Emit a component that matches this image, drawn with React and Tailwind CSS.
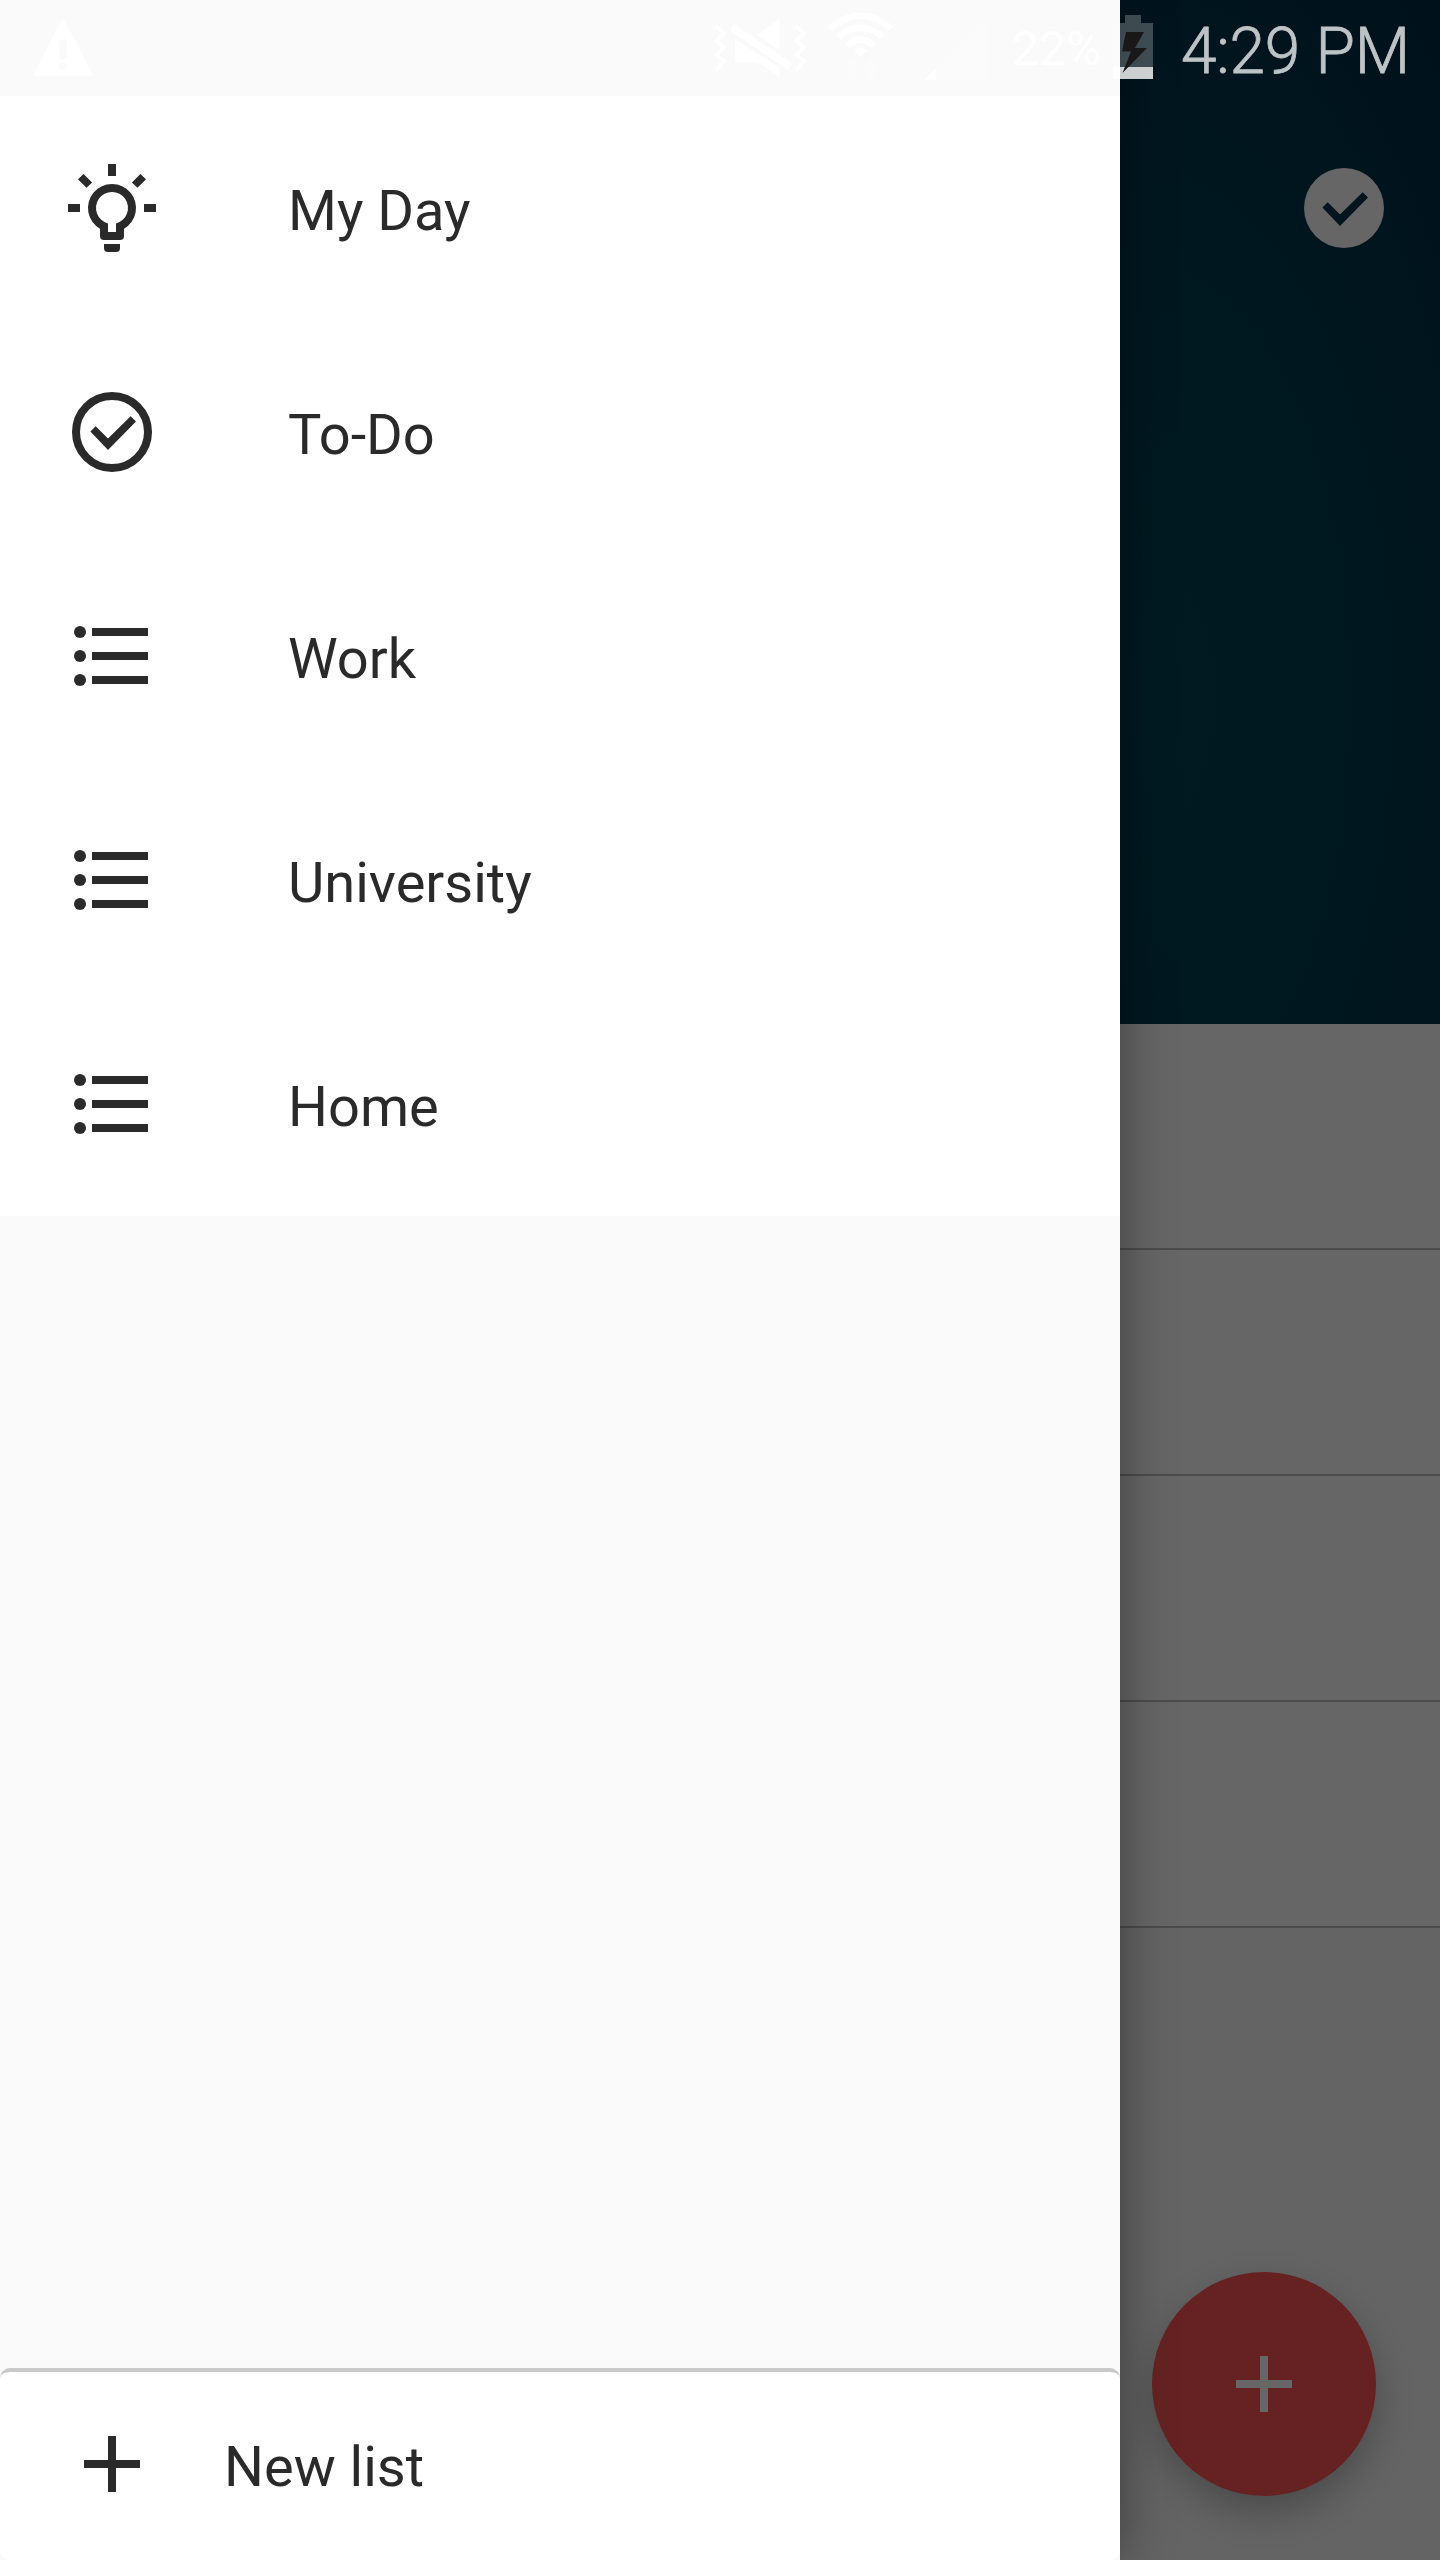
const INK = "#2a2a2a";

const CHECK = "M6.6 11.9L7.93 10.58L11 13.64L16.67 8.05L18 9.4L11 16.5Z";

function BulbIcon() {
  return (
    <svg viewBox="0 0 24 24" className="size-24 shrink-0" fill={INK}>
      <path d="M11 1h2v3h-2zM1 11h3v2H1zM20 11h3v2h-3z" />
      <path d="M4.9 3.48L7.02 5.6L5.65 6.93L3.5 4.83zM19.1 3.48L16.98 5.6L18.35 6.93L20.5 4.83z" />
      <path
        fillRule="evenodd"
        d="M9 17.2A6 6 0 1 1 15 17.2V19a1 1 0 0 1-1 1h-4a1 1 0 0 1-1-1zM11 15.87V18h2v-2.13a4 4 0 1 0-2 0z"
      />
      <path d="M10 21h4v1a1 1 0 0 1-1 1h-2a1 1 0 0 1-1-1z" />
    </svg>
  );
}

function CheckIcon() {
  return (
    <svg viewBox="0 0 24 24" className="size-24 shrink-0" fill={INK}>
      <circle cx="12" cy="12" r="9" fill="none" stroke={INK} strokeWidth="2" />
      <path d={CHECK} />
    </svg>
  );
}

function ListIcon() {
  return (
    <svg viewBox="0 0 24 24" className="size-24 shrink-0" fill={INK}>
      <circle cx="4" cy="6" r="1.5" />
      <circle cx="4" cy="12" r="1.5" />
      <circle cx="4" cy="18" r="1.5" />
      <path d="M7 5h14v2H7zM7 11h14v2H7zM7 17h14v2H7z" />
    </svg>
  );
}

function PlusIcon({ color }) {
  return (
    <svg viewBox="0 0 24 24" className="size-24 shrink-0" fill={color}>
      <path d="M11 5h2v6h6v2h-6v6h-2v-6H5v-2h6z" />
    </svg>
  );
}

const LISTS = [
  { label: "My Day", Icon: BulbIcon },
  { label: "To-Do", Icon: CheckIcon },
  { label: "Work", Icon: ListIcon },
  { label: "University", Icon: ListIcon },
  { label: "Home", Icon: ListIcon },
];

function StatusBar() {
  return (
    <div className="absolute inset-x-0 top-0 z-20 flex h-24 items-start text-white">
      <svg viewBox="0 0 60 58" className="mt-[19px] ml-[33px] h-[58px] w-[60px] shrink-0" fill="white">
        <path
          fillRule="evenodd"
          d="M28 2.5Q30 0 32 2.5L58.500 53Q60 57 56.500 57H3.500Q0 57 1.500 53ZM25.500 20.500L26.800 40H33L34.300 20.500ZM30 43.200a4 4 0 1 0 .01 0Z"
        />
      </svg>
      <svg viewBox="714 0 92 96" className="ml-[621px] h-24 w-[92px] shrink-0" fill="white">
        <path d="M779.500 19V50L757 35zM735 39L779.500 68V77L757.500 62H735z" />
        <path d="M733.500 24L792.500 63.500L788 70L730 30.500z" />
        <path
          d="M716 26L724 33.500L716.500 40.500L724 47.500L716.500 54.500L724 61L716.500 70M796 26L804 33.500L796.500 40.500L804 47.500L796.500 54.500L804 61L796.500 70"
          fill="none"
          stroke="white"
          strokeWidth="3.500"
        />
      </svg>
      <svg viewBox="826 0 70 96" className="ml-[20px] h-24 w-[70px] shrink-0">
        <g fill="none" stroke="white" strokeWidth="6.500">
          <path d="M829.500 28.500Q861 3 891 28.500" />
          <path d="M838 37Q861 18.500 882.500 37" />
          <path d="M847 46Q861 33 873.500 46" />
        </g>
        <path d="M854 50.500Q861 45 867 50.500L860.500 57z" fill="white" />
        <path d="M849 58h7v12h5L852.500 81L844 70h5zM871 57l9 11h-5v11h-9V68h-4z" fill="white" opacity="0.25" />
      </svg>
      <svg viewBox="924 0 64 96" className="ml-[28px] h-24 w-16 shrink-0">
        <path d="M924 80L988 17V80z" fill="white" opacity="0.25" />
        <path d="M924 80L936 68V80z" fill="white" />
      </svg>
      <span className="mt-[19px] ml-[24px] w-[101px] text-[48px] leading-[60px] whitespace-nowrap">22%</span>
      <svg viewBox="0 0 40 64" className="mt-[15px] h-16 w-10 shrink-0">
        <path d="M12 0h16v8h12v44H0V8h12z" fill="white" opacity="0.24" />
        <path d="M0 52h40v12H0z" fill="white" opacity="0.8" />
        <path d="M13 17H31L22 33H34L9.500 58L18 36.500H9z" fill="#181818" />
      </svg>
      <span className="mt-[14px] ml-[28px] text-[64px] leading-[76px] font-light tracking-[-0.2px] whitespace-nowrap text-[#bdc3c6] [-webkit-text-stroke:0.8px_#bdc3c6]">
        4:29 PM
      </span>
    </div>
  );
}

function Drawer() {
  return (
    <aside className="relative z-10 flex h-full w-[1120px] shrink-0 flex-col bg-[#fafafa] pt-24 shadow-[0_0_50px_rgba(0,0,0,0.4)]">
      <nav className="flex flex-col bg-white">
        {LISTS.map(({ label, Icon }) => (
          <a key={label} className="flex h-56 items-center gap-32 pl-16">
            <Icon />
            <span className="pt-[5px] text-[56px] leading-[66px] text-[#2a2a2a]">{label}</span>
          </a>
        ))}
      </nav>
      <button className="mt-auto flex h-48 items-center gap-16 rounded-[10px] border-t-4 border-[#c8c8c8] bg-white pb-1 pl-16">
        <PlusIcon color={INK} />
        <span className="pt-[5px] text-[56px] leading-[66px] text-[#2a2a2a]">New list</span>
      </button>
    </aside>
  );
}

function TaskPane() {
  return (
    <main className="relative flex h-full min-w-0 flex-1 flex-col bg-[#646464]">
      <header className="flex h-[1024px] justify-end bg-[radial-gradient(ellipse_460px_1000px_at_10%_68%,#001a21,#00171f_50%,#00101b)] pt-40 pr-12">
        <svg viewBox="0 0 24 24" className="size-24">
          <path
            fillRule="evenodd"
            fill="#666666"
            d={"M12 2a10 10 0 1 0 0 20a10 10 0 1 0 0-20z" + CHECK}
          />
        </svg>
      </header>
      {[0, 1, 2, 3].map((row) => (
        <div key={row} className="h-[226px] border-b-2 border-[#4c4c4c] bg-[#666666]" />
      ))}
      <button className="absolute right-16 bottom-16 flex size-56 items-center justify-center rounded-full bg-[#662222] shadow-[0_16px_36px_rgba(0,0,0,0.25)]">
        <PlusIcon color="#666666" />
      </button>
    </main>
  );
}

export default function App() {
  return (
    <div className="relative flex h-[2560px] w-[1440px] overflow-hidden font-['Roboto',sans-serif]">
      <Drawer />
      <TaskPane />
      <StatusBar />
    </div>
  );
}
